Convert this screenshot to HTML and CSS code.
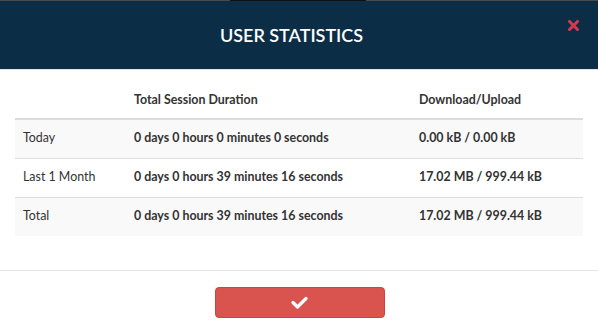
FILE: index.html
```html
<!DOCTYPE html>
<html>
<head>
<meta charset="utf-8">
<link rel="stylesheet" href="styles.css">
</head>
<body>
<div class="backdrop"><span class="peek"></span></div>
<div class="modal">
  <div class="modal-header">
    <h1 class="title">USER STATISTICS</h1>
    <span class="close" aria-label="close">
      <svg width="11" height="11" viewBox="0 0 11 11"><path d="M1.5 1.5 L9.5 9.5 M9.5 1.5 L1.5 9.5" stroke="#d8384f" stroke-width="3" stroke-linecap="square"/></svg>
    </span>
  </div>
  <div class="modal-body">
    <table class="stats">
      <thead>
        <tr><th class="c1"></th><th class="c2">Total Session Duration</th><th class="c3">Download/Upload</th></tr>
      </thead>
      <tbody>
        <tr class="odd"><td class="label">Today</td><td>0 days 0 hours 0 minutes 0 seconds</td><td>0.00 kB / 0.00 kB</td></tr>
        <tr><td class="label">Last 1 Month</td><td>0 days 0 hours 39 minutes 16 seconds</td><td>17.02 MB / 999.44 kB</td></tr>
        <tr class="odd"><td class="label">Total</td><td>0 days 0 hours 39 minutes 16 seconds</td><td>17.02 MB / 999.44 kB</td></tr>
      </tbody>
    </table>
  </div>
  <div class="modal-footer">
    <button class="ok" aria-label="ok">
      <svg width="17" height="13" viewBox="0 0 17 13"><path d="M2 6.5 L6.5 11 L15 2.5" fill="none" stroke="#fff" stroke-width="3.2" stroke-linecap="round" stroke-linejoin="round"/></svg>
    </button>
  </div>
</div>
</body>
</html>
```
FILE: styles.css
```css
* { box-sizing: border-box; }
html, body { margin: 0; padding: 0; background: #fff; }
body { font-family: Lato, "Open Sans", sans-serif; color: #333; width: 598px; height: 330px; overflow: hidden; }
.backdrop { height: 1px; background: #4a4a4a; display: flex; justify-content: flex-start; }
.peek { display: block; margin-left: 230px; width: 136px; height: 1px; background: #111; }
.modal { width: 598px; }
.modal-header { position: relative; height: 69px; background: #0b2d46; border-bottom: 1px solid #e5e5e5; display: flex; align-items: center; justify-content: center; }
.title { margin: 0; color: #fff; font-size: 18px; font-weight: 600; letter-spacing: 0; padding-right: 15px; }
.close { position: absolute; right: 19px; top: 19px; line-height: 0; }
.modal-body { padding: 10px 15px 34px; }
.stats { width: 568px; border-collapse: collapse; font-size: 12.4px; }
.stats th, .stats td { text-align: left; padding: 0 8px 2px; height: 39px; vertical-align: middle; }
.stats th { font-weight: 700; height: 39px; border-bottom: 2px solid #ddd; padding-bottom: 0; }
.stats td { border-top: 1px solid #ddd; font-weight: 700; }
.stats tbody tr:first-child td { border-top: 0; }
.stats td.label { font-weight: 400; }
.c1 { width: 111px; }
.c2 { width: 285px; }
.c3 { width: 172px; }
.stats tr.odd td { background: #f9f9f9; }
.modal-footer { border-top: 1px solid #e5e5e5; padding: 16px 0 0; display: flex; justify-content: center; }
.ok { width: 170px; height: 31px; margin-left: 1px; background: #d9534f; border: 1px solid #d43f3a; border-radius: 4px; display: flex; align-items: center; justify-content: center; padding: 0; }
```
